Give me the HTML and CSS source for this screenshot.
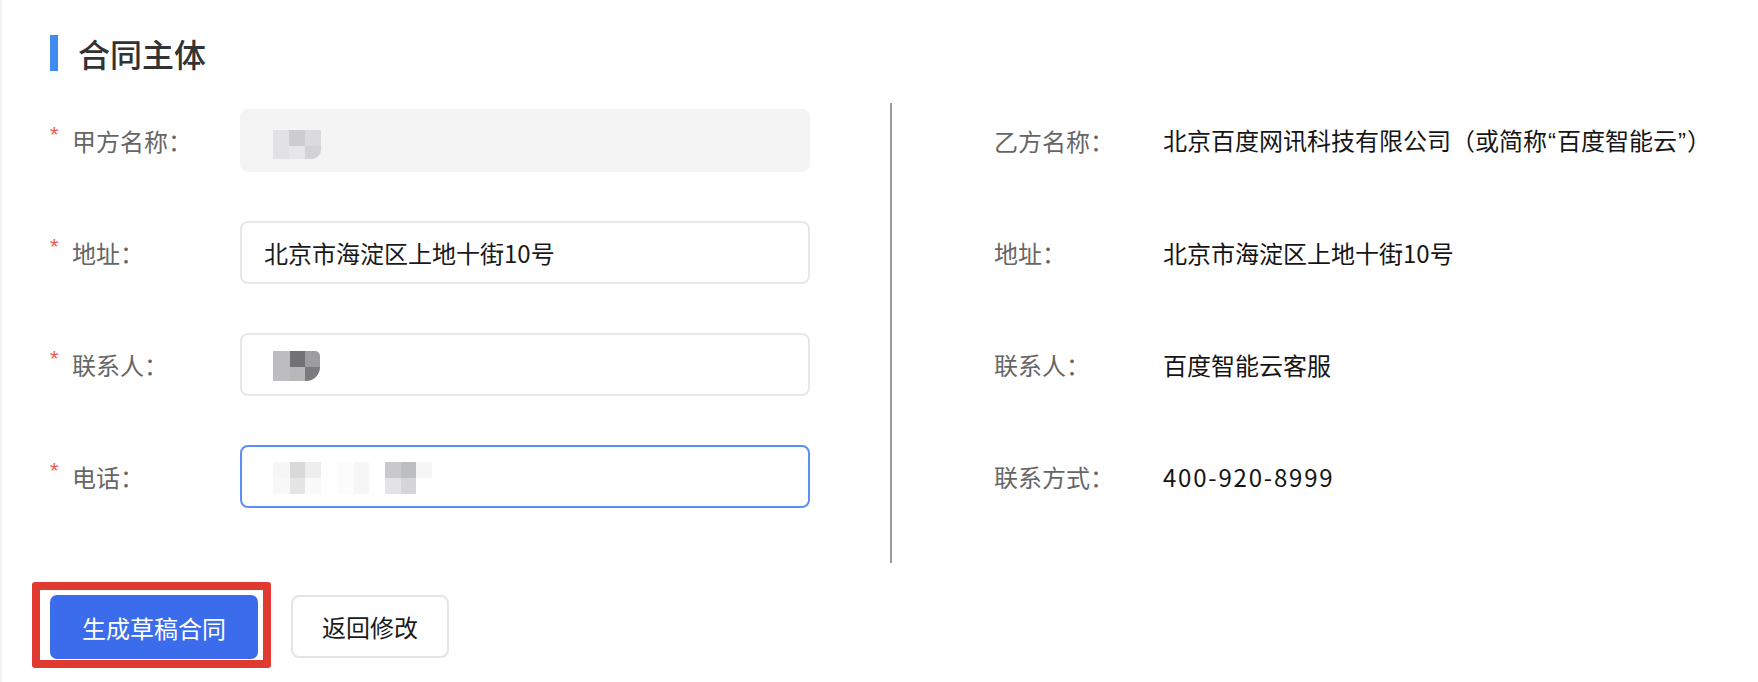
FILE: index.html
```html
<!DOCTYPE html>
<html lang="zh-CN">
<head>
<meta charset="utf-8">
<title>合同主体</title>
<link rel="stylesheet" href="styles.css">
</head>
<body>
<div class="page">
  <div class="section-title">
    <span class="bar"></span>
    <h2 class="title">合同主体</h2>
  </div>

  <div class="form">
    <div class="col-left">
      <div class="row">
        <div class="label"><span class="star">*</span>甲方名称：</div>
        <div class="input disabled"><span class="mosaic mosaic-name"></span></div>
      </div>
      <div class="row">
        <div class="label"><span class="star">*</span>地址：</div>
        <div class="input">北京市海淀区上地十街10号</div>
      </div>
      <div class="row">
        <div class="label"><span class="star">*</span>联系人：</div>
        <div class="input"><span class="mosaic mosaic-contact"></span></div>
      </div>
      <div class="row">
        <div class="label"><span class="star">*</span>电话：</div>
        <div class="input focused"><span class="mosaic mosaic-phone"></span></div>
      </div>
    </div>

    <div class="divider"></div>

    <div class="col-right">
      <div class="row">
        <div class="r-label">乙方名称：</div>
        <div class="r-value">北京百度网讯科技有限公司（或简称<span class="quote">“</span>百度智能云<span class="quote">”</span>）</div>
      </div>
      <div class="row">
        <div class="r-label">地址：</div>
        <div class="r-value">北京市海淀区上地十街10号</div>
      </div>
      <div class="row">
        <div class="r-label">联系人：</div>
        <div class="r-value">百度智能云客服</div>
      </div>
      <div class="row">
        <div class="r-label">联系方式：</div>
        <div class="r-value phone">400-920-8999</div>
      </div>
    </div>
  </div>

  <div class="actions">
    <div class="highlight">
      <button class="btn btn-primary" type="button">生成草稿合同</button>
    </div>
    <button class="btn btn-default" type="button">返回修改</button>
  </div>
</div>
</body>
</html>
```

FILE: styles.css
```css
*,
*::before,
*::after {
  box-sizing: border-box;
}

html, body {
  margin: 0;
  padding: 0;
  background: #ffffff;
}

body {
  font-family: "Noto Sans CJK SC", "Noto Sans", sans-serif;
  color: #1a1a1a;
  border-left: 2px solid #f3f4f6;
  min-height: 682px;
}

.page {
  padding: 35px 0 0 48px;
}

.section-title {
  display: flex;
  align-items: center;
  gap: 20px;
  height: 36px;
}

.bar {
  width: 8px;
  height: 36px;
  background: #3f8bf1;
}

.title {
  margin: 0;
  font-size: 32px;
  line-height: 36px;
  font-weight: 500;
  color: #333333;
}

.form {
  display: flex;
  margin-top: 32px;
}

.col-left {
  width: 760px;
  padding: 6px 0 55px;
  display: flex;
  flex-direction: column;
  gap: 49px;
}

.row {
  display: flex;
  align-items: center;
  height: 63px;
}

.label {
  width: 190px;
  display: flex;
  align-items: center;
  font-size: 24px;
  line-height: 32px;
  color: #666666;
}

.star {
  width: 22px;
  align-self: flex-start;
  font-family: "Liberation Sans", sans-serif;
  font-size: 22px;
  line-height: 22px;
  color: #ef5a50;
  margin-top: -1px;
}

.input {
  width: 570px;
  height: 63px;
  border: 2px solid #e7e7e9;
  border-radius: 8px;
  padding: 0 22px;
  display: flex;
  align-items: center;
  font-size: 24px;
  color: #1a1a1a;
  background: #ffffff;
}

.input.disabled {
  background: #f4f4f5;
  border-color: #f4f4f5;
}

.input.focused {
  border-color: #5b8ef7;
}

.mosaic {
  display: block;
  margin-left: 9px;
}

.mosaic-name {
  width: 48px;
  height: 29px;
  margin-top: 8px;
  border-bottom-right-radius: 9px;
  background:
    linear-gradient(#cdcdd1, #cdcdd1) 16px 0 / 16px 16px no-repeat,
    linear-gradient(#dbdbde, #dbdbde) 32px 0 / 16px 16px no-repeat,
    linear-gradient(#e6e6e8, #e6e6e8) 16px 16px / 16px 13px no-repeat,
    linear-gradient(#d3d3d7, #d3d3d7) 32px 16px / 16px 13px no-repeat,
    #e2e2e4;
}

.mosaic-contact {
  width: 47px;
  height: 30px;
  margin-top: 2px;
  border-radius: 0 5px 14px 0;
  background:
    linear-gradient(#727276, #727276) 17px 0 / 15px 16px no-repeat,
    linear-gradient(#9d9da1, #9d9da1) 32px 0 / 15px 16px no-repeat,
    linear-gradient(#b8b8bb, #b8b8bb) 17px 16px / 15px 14px no-repeat,
    linear-gradient(#7b7b7f, #7b7b7f) 32px 16px / 15px 14px no-repeat,
    #bdbdc0;
}

.mosaic-phone {
  width: 160px;
  height: 32px;
  margin-top: 2px;
  background:
    linear-gradient(#f6f6f6, #f6f6f6) 0 0 / 17px 16px no-repeat,
    linear-gradient(#f8f8f8, #f8f8f8) 0 16px / 17px 16px no-repeat,
    linear-gradient(#d9d9d9, #d9d9d9) 17px 0 / 15px 16px no-repeat,
    linear-gradient(#e5e5e5, #e5e5e5) 17px 16px / 15px 16px no-repeat,
    linear-gradient(#eeeeee, #eeeeee) 32px 0 / 16px 16px no-repeat,
    linear-gradient(#f9f9f9, #f9f9f9) 32px 16px / 16px 16px no-repeat,
    linear-gradient(#fcfcfc, #fcfcfc) 64px 0 / 17px 32px no-repeat,
    linear-gradient(#f6f6f6, #f6f6f6) 81px 0 / 15px 32px no-repeat,
    linear-gradient(#c9c9cc, #c9c9cc) 112px 0 / 16px 16px no-repeat,
    linear-gradient(#e3e3e5, #e3e3e5) 112px 16px / 16px 16px no-repeat,
    linear-gradient(#bdbec1, #bdbec1) 128px 0 / 15px 16px no-repeat,
    linear-gradient(#d6d6d8, #d6d6d8) 128px 16px / 15px 16px no-repeat,
    linear-gradient(#f6f6f6, #f6f6f6) 143px 0 / 16px 16px no-repeat,
    transparent;
}

.divider {
  width: 2px;
  margin-left: 80px;
  background: #9b9b9b;
}

.col-right {
  padding: 6px 0 55px 102px;
  display: flex;
  flex-direction: column;
  gap: 49px;
}

.r-label {
  width: 169px;
  font-size: 24px;
  line-height: 32px;
  color: #666666;
}

.r-value {
  font-size: 24px;
  line-height: 32px;
  color: #151515;
  white-space: nowrap;
}

.quote {
  font-family: "Liberation Sans", sans-serif;
  padding: 0 1px;
}

.phone {
  letter-spacing: 1.8px;
}

.actions {
  display: flex;
  align-items: flex-start;
  gap: 33px;
  margin-top: 32px;
}

.highlight {
  position: relative;
}

.highlight::after {
  content: "";
  position: absolute;
  left: -18px;
  top: -13px;
  width: 239px;
  height: 86px;
  border: 8px solid #e0392f;
  border-radius: 3px;
  pointer-events: none;
}

.btn {
  font-family: "Noto Sans CJK SC", "Noto Sans", sans-serif;
  font-size: 24px;
  border-radius: 7px;
  cursor: pointer;
  padding: 0;
}

.btn-primary {
  display: block;
  width: 208px;
  height: 64px;
  background: #3b6cec;
  border: none;
  color: #ffffff;
}

.btn-default {
  width: 158px;
  height: 63px;
  background: #ffffff;
  border: 2px solid #e5e5e7;
  color: #1a1a1a;
  border-radius: 8px;
}
```
